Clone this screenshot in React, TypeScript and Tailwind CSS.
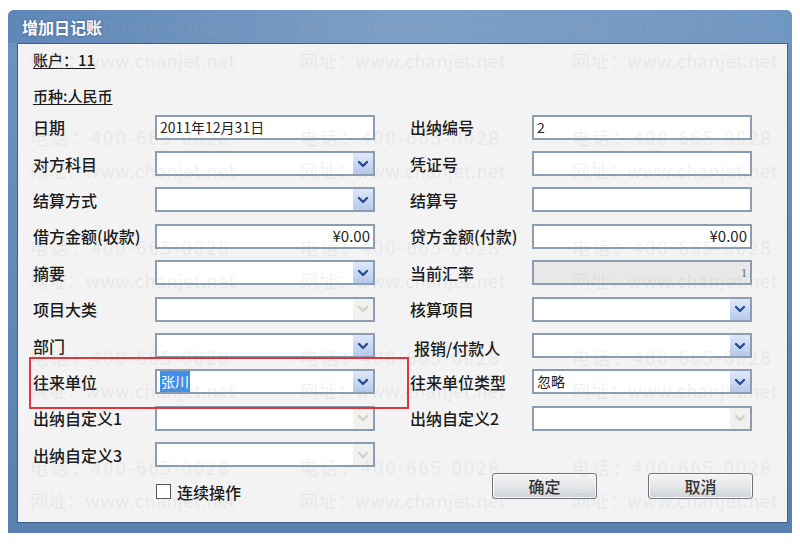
import type { ReactNode } from 'react';

const font = "font-['Noto_Sans_CJK_SC','Noto_Sans',sans-serif]";

const Chevron = ({ disabled }: { disabled?: boolean }) => (
	<div
		className={`flex h-full w-[20px] items-center justify-center ${
			disabled ? 'bg-[#f1f1ef]' : 'bg-gradient-to-b from-[#dfe8f8] to-[#b6caee]'
		}`}
	>
		<svg width="12" height="8" viewBox="0 0 12 8">
			<path
				d="M2 2 L6 6 L10 2"
				fill="none"
				stroke={disabled ? '#cfd2c8' : '#2a4d8f'}
				strokeWidth="2.4"
				strokeLinecap="round"
				strokeLinejoin="round"
			/>
		</svg>
	</div>
);

type FieldProps = {
	children?: ReactNode;
	arrow?: 'on' | 'off';
	gray?: boolean;
	right?: boolean;
};

const Field = ({ children, arrow, gray, right }: FieldProps) => (
	<div
		className={`flex h-[25px] w-[220px] items-center border-2 border-[#8d9db1] ${
			gray ? 'bg-[#e8e8e8]' : 'bg-white'
		}`}
	>
		<div
			className={`flex flex-1 items-center px-[3px] text-[14px] text-[#222] ${
				right ? 'justify-end' : ''
			}`}
		>
			{children}
		</div>
		{arrow && <Chevron disabled={arrow === 'off'} />}
	</div>
);

const Row = ({
	label,
	field,
	label2,
	field2,
}: {
	label?: ReactNode;
	field?: ReactNode;
	label2?: ReactNode;
	field2?: ReactNode;
}) => (
	<div className="flex h-[36.4px] items-center">
		<div className="w-[122px] text-[16px] font-medium text-[#1a1a1a]">{label}</div>
		<div className="w-[219px]">{field}</div>
		<div className="w-[36px]" />
		<div className="w-[122px] text-[16px] font-medium text-[#1a1a1a]">{label2}</div>
		<div className="w-[220px]">{field2}</div>
	</div>
);

const Btn = ({ children }: { children: ReactNode }) => (
	<button className="flex h-[26px] w-[105px] items-center justify-center rounded-[3px] border border-[#6f747c] bg-gradient-to-b from-[#f4f5f6] via-[#e6e8ea] to-[#cfd3d8] text-[16px] font-medium text-[#333] shadow-[inset_0_0_0_1px_#fafafa]">
		{children}
	</button>
);

const marks: { text: string; x: number; y: number; tel: boolean }[] = [];
for (let k = 0; k < 5; k++) {
	for (const x of [30, 300, 572]) {
		marks.push({ text: '电话：400-665-0028', x, y: 15 + 110 * k, tel: true });
		marks.push({ text: '网址：www.chanjet.net', x, y: 48 + 110 * k, tel: false });
	}
}

export default function App() {
	return (
		<div className={`relative h-[545px] w-[800px] overflow-hidden bg-white ${font}`}>
			<div className="pl-[8px] pt-[10px]">
				<div className="flex h-[523px] w-[784px] flex-col overflow-hidden rounded-t-[6px] bg-gradient-to-b from-[#6d93c0] to-[#5a80b0]">
					<div className="flex h-[33px] items-center bg-gradient-to-r from-[#5f87b7] via-[#7d9fc6] to-[#7097c2] pl-[14px]">
						<span className="text-[16px] font-bold text-white [text-shadow:0_0_3px_#3a5f8c]">
							增加日记账
						</span>
					</div>
					<div className="mb-[10px] ml-[9px] mr-[4px] flex flex-1 flex-col border border-[#3f5f88] bg-[#f3f3f3] pl-[15px]">
						<div className="flex flex-col gap-[13px] pt-[5px] text-[15px] font-medium text-[#1a1a1a]">
							<span className="underline underline-offset-2">账户：11</span>
							<span className="underline underline-offset-2">币种:人民币</span>
						</div>
						<div className="mt-[2px] flex flex-col">
							<Row
								label="日期"
								field={<Field>2011年12月31日</Field>}
								label2="出纳编号"
								field2={<Field>2</Field>}
							/>
							<Row
								label="对方科目"
								field={<Field arrow="on" />}
								label2="凭证号"
								field2={<Field />}
							/>
							<Row
								label="结算方式"
								field={<Field arrow="on" />}
								label2="结算号"
								field2={<Field />}
							/>
							<Row
								label="借方金额(收款)"
								field={
									<Field right>
										<span className="text-[15px]">¥0.00</span>
									</Field>
								}
								label2="贷方金额(付款)"
								field2={
									<Field right>
										<span className="text-[15px]">¥0.00</span>
									</Field>
								}
							/>
							<Row
								label="摘要"
								field={<Field arrow="on" />}
								label2="当前汇率"
								field2={
									<Field gray right>
										<span className="font-['Liberation_Serif',serif] text-[12px] text-[#666]">1</span>
									</Field>
								}
							/>
							<Row
								label="项目大类"
								field={<Field arrow="off" />}
								label2="核算项目"
								field2={<Field arrow="on" />}
							/>
							<Row
								label="部门"
								field={<Field arrow="on" />}
								label2={<span className="inline-block pl-[4px] pt-[4px]">报销/付款人</span>}
								field2={<Field arrow="on" />}
							/>
							<Row
								label="往来单位"
								field={
									<Field arrow="on">
										<span className="bg-[#3f8fe6] px-[1px] text-white">张川</span>
									</Field>
								}
								label2="往来单位类型"
								field2={<Field arrow="on">忽略</Field>}
							/>
							<Row
								label="出纳自定义1"
								field={<Field arrow="off" />}
								label2="出纳自定义2"
								field2={<Field arrow="off" />}
							/>
							<Row label="出纳自定义3" field={<Field arrow="off" />} />
							<div className="flex h-[34px] items-start">
								<div className="w-[123px]" />
								<div className="mt-[7px] flex w-[336px] items-center gap-[6px]">
									<span className="h-[15px] w-[15px] border border-[#555] bg-white" />
									<span className="text-[16px] font-medium text-[#1a1a1a]">连续操作</span>
								</div>
								<div className="flex items-center gap-[51px]">
									<Btn>确定</Btn>
									<Btn>取消</Btn>
								</div>
							</div>
						</div>
					</div>
				</div>
			</div>

			{/* watermark */}
			<div className="pointer-events-none absolute inset-0">
				{marks.map((m, i) => (
					<span
						key={i}
						className={`absolute whitespace-nowrap text-[18px] leading-[24px] text-[rgba(170,170,170,0.17)] ${
							m.tel ? 'tracking-[2.3px]' : 'tracking-[0.5px]'
						}`}
						style={{ left: m.x, top: m.y }}
					>
						{m.text}
					</span>
				))}
			</div>

			{/* red highlight */}
			<div className="pointer-events-none absolute left-[29px] top-[357px] h-[52px] w-[380px] border-2 border-[#e0383a]" />
		</div>
	);
}
